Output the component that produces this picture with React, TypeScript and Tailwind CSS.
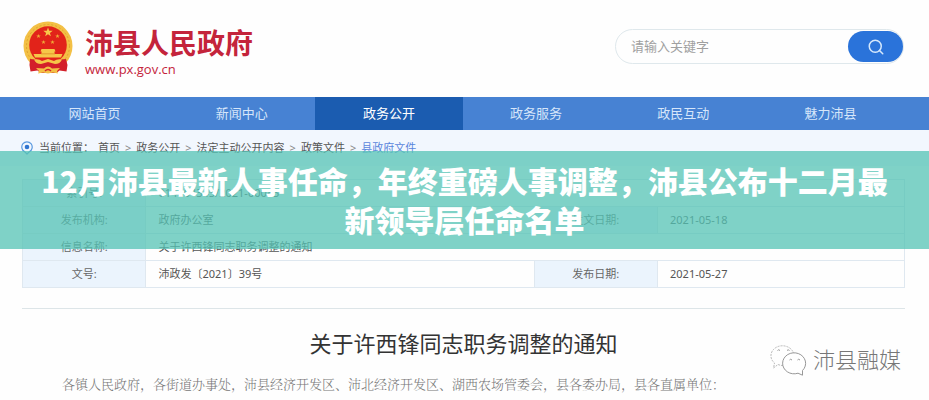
import { Search } from 'lucide-react';

const NAV_ITEMS = ['网站首页', '新闻中心', '政务公开', '政务服务', '政民互动', '魅力沛县'];
const ACTIVE_ITEM = '政务公开';

const CRUMBS = ['首页', '政务公开', '法定主动公开内容', '政策文件', '县政府文件'];

const labelCell = 'border border-[#dfe8f0] bg-[#ebf4fd] text-center font-normal text-[#666]';
const valueCell = 'border border-[#dfe8f0] pl-3';

function Emblem() {
  return (
    <svg viewBox="0 0 50 54" className="h-[54px] w-[50px]" aria-hidden="true">
      <circle cx="25" cy="25" r="24.5" fill="#f3c045" />
      <circle cx="25" cy="25" r="21.5" fill="none" stroke="#e0a52f" strokeWidth="1" strokeDasharray="2 2" />
      <circle cx="25" cy="24" r="18.8" fill="#e2231a" />
      <path
        d="M25 6.500l1.200 3.300h3.500l-2.800 2.100 1 3.300-2.900-2-2.900 2 1-3.300-2.800-2.100h3.500z"
        fill="#f8c84a"
      />
      <path
        d="M15.500 13l.6 1.500h1.600l-1.300 1 .5 1.500-1.400-.9-1.400.9.500-1.500-1.300-1h1.600zM34.500 13l.6 1.500h1.600l-1.300 1 .5 1.500-1.400-.9-1.400.9.500-1.500-1.300-1h1.600zM20.500 19l.6 1.500h1.600l-1.300 1 .5 1.500-1.400-.9-1.400.9.500-1.500-1.300-1h1.600zM29.500 19l.6 1.500h1.600l-1.300 1 .5 1.500-1.400-.9-1.400.9.500-1.500-1.300-1h1.600z"
        fill="#f0a836"
      />
      <path d="M18.500 28h13l1 2.500h-1V33h8l-1.500 3.500h-26L10.500 33h8v-2.500h-1z" fill="#f6c648" />
      <path d="M18 32.800h14" stroke="#e08a28" strokeWidth="0.8" />
      <path d="M7 38l11 1 7 3 7-3 11-1 1.500 6-1 6.500-7-1-3 2.500H17.500l-3-2.500-7 1-1-6.500z" fill="#d3202a" />
      <path d="M11 38.500q5-1 8 1.500l6-2 6 2q3-2.500 8-1.500-2 4.500-7 4.500l-7-2-7 2q-5 0-7-4.500z" fill="#f6c648" />
      <path d="M13 47l8 .5q4-4 8 0l8-.5-3 3 1 2.500-5-1-5 1-5-1-5 1 1-2.500z" fill="#f3c045" />
      <path d="M22 50q3-3 6 0" fill="none" stroke="#d3202a" strokeWidth="1.500" />
    </svg>
  );
}

function LocationIcon() {
  return (
    <svg viewBox="0 0 12 14" className="h-[14px] w-[12px]" fill="none" aria-hidden="true">
      <path
        d="M6 13 3.500 10.600A5.200 5.200 0 1 1 8.500 10.600z"
        stroke="#5b9ae0"
        strokeWidth="1.200"
        strokeLinejoin="round"
      />
      <circle cx="6" cy="6" r="2.300" fill="#2f74cf" />
    </svg>
  );
}

function WechatIcon() {
  return (
    <svg viewBox="0 0 38 32" className="h-8 w-[38px]" fill="none" aria-hidden="true">
      <path
        d="M14 21.500q-2.500 0-5-1L4.500 24l1-5A11.500 10 0 1 1 24.500 9"
        stroke="#b0b0b0"
        strokeWidth="0.900"
        strokeDasharray="2 1"
      />
      <path
        d="M33.500 26.500A11.500 10.500 0 1 0 29 29.200l4.500 2z"
        fill="#fff"
        stroke="#8c8c8c"
        strokeWidth="0.900"
      />
      <path
        d="M8.500 6.500q1-1.500 2.500 0M18 6.500q1-1.500 2.500 0M20.500 16q1-1.500 2.500 0M28.500 16q1-1.500 2.500 0"
        stroke="#999"
      />
    </svg>
  );
}

function Header() {
  return (
    <header className="flex h-[97px] items-start justify-between pl-[23px] pr-[25px]">
      <div className="flex gap-3 pt-[21px]">
        <Emblem />
        <div className="pt-[5px] text-[#c4243b]">
          <div className="text-[28px] leading-[34px] font-bold">沛县人民政府</div>
          <a href="#" className="block font-['Open_Sans',sans-serif] text-[13px] leading-[18px]">
            www.px.gov.cn
          </a>
        </div>
      </div>
      <form className="mt-[29px] flex h-[35px] w-[289px] items-center rounded-full border border-[#dfe8ec] pl-[15px]">
        <input
          type="text"
          aria-label="请输入关键字"
          placeholder="请输入关键字"
          className="min-w-0 flex-1 text-[13px] outline-none placeholder:text-[#a0a0a0]"
        />
        <button
          type="button"
          aria-label="搜索"
          className="flex h-[31px] w-[55px] items-center justify-center rounded-full bg-[#2a73da] text-[#d5e8fc]"
        >
          <Search size={18} strokeWidth={2} />
        </button>
      </form>
    </header>
  );
}

function Navigation() {
  return (
    <nav className="flex h-[33px] bg-[#4782d3] pl-[21px] pr-[25px] text-[13px]">
      {NAV_ITEMS.map((item) => (
        <a
          key={item}
          href="#"
          className={`flex flex-1 items-center justify-center ${
            item === ACTIVE_ITEM ? 'bg-[#1b5cb0] text-white' : 'text-[#d6e6fa]'
          }`}
        >
          {item}
        </a>
      ))}
    </nav>
  );
}

function Breadcrumb() {
  return (
    <div className="flex h-9 items-center bg-[#f2f7fe] pl-[21px] text-[11px] text-[#555]">
      <LocationIcon />
      <span className="ml-1.5 mr-1">当前位置：</span>
      {CRUMBS.map((crumb, i) => (
        <span key={crumb}>
          {i > 0 && <span className="px-[5px] text-[#888]">&gt;</span>}
          <a href="#" className={i === CRUMBS.length - 1 ? 'text-[#5b86dc]' : ''}>
            {crumb}
          </a>
        </span>
      ))}
    </div>
  );
}

function InfoTable() {
  return (
    <table className="w-full table-fixed border-collapse text-left text-[11px] text-[#555]">
      <colgroup>
        <col className="w-[14%]" />
        <col className="w-[44%]" />
        <col className="w-[14%]" />
        <col className="w-[28%]" />
      </colgroup>
      <tbody>
        <tr className="h-[27px]">
          <th className={labelCell}>索引号:</th>
          <td colSpan={3} className={valueCell}>014004345/2021-00085</td>
        </tr>
        <tr className="h-[27px]">
          <th className={labelCell}>发布机构:</th>
          <td className={valueCell}>政府办公室</td>
          <th className={labelCell}>发文日期:</th>
          <td className={valueCell}>2021-05-18</td>
        </tr>
        <tr className="h-[27px]">
          <th className={labelCell}>信息名称:</th>
          <td colSpan={3} className={valueCell}>关于许西锋同志职务调整的通知</td>
        </tr>
        <tr className="h-[27px]">
          <th className={labelCell}>文号:</th>
          <td className={valueCell}>沛政发〔2021〕39号</td>
          <th className={labelCell}>发布日期:</th>
          <td className={valueCell}>2021-05-27</td>
        </tr>
      </tbody>
    </table>
  );
}

export default function App() {
  return (
    <div
      lang="zh-CN"
      className="relative min-h-screen overflow-hidden bg-[#fefefe] font-['Noto_Sans','Noto_Sans_CJK_SC',sans-serif]"
    >
      <Header />
      <Navigation />
      <Breadcrumb />

      <main className="pl-[22px] pr-6 pt-[13px]">
        <InfoTable />
        <article className="relative mt-5 border-t border-[#dde5e8] pt-4">
          <h2 className="text-center text-[22px] leading-9 text-[#333]">关于许西锋同志职务调整的通知</h2>
          <p className="mt-3 pl-10 font-['Liberation_Serif','Noto_Serif_CJK_SC','Noto_Sans_CJK_SC',serif] text-[13px] leading-6 font-light text-[#777]">
            各镇人民政府，各街道办事处，沛县经济开发区、沛北经济开发区、湖西农场管委会，县各委办局，县各直属单位：
          </p>
          <div className="absolute top-[34px] right-1 flex items-center gap-1.5 text-[22px] text-[#777]">
            <WechatIcon />
            <span className="font-light">沛县融媒</span>
          </div>
        </article>
      </main>

      {/* headline banner laid over the page */}
      <div className="absolute inset-x-0 top-[151px] bg-[#54c3b4]/75 px-8 py-[10px]">
        <h1 className="text-center font-['Noto_Sans_CJK_SC',sans-serif] text-[30px] leading-[39px] font-black text-white">
          12月沛县最新人事任命，年终重磅人事调整，沛县公布十二月最新领导层任命名单
        </h1>
      </div>
    </div>
  );
}
